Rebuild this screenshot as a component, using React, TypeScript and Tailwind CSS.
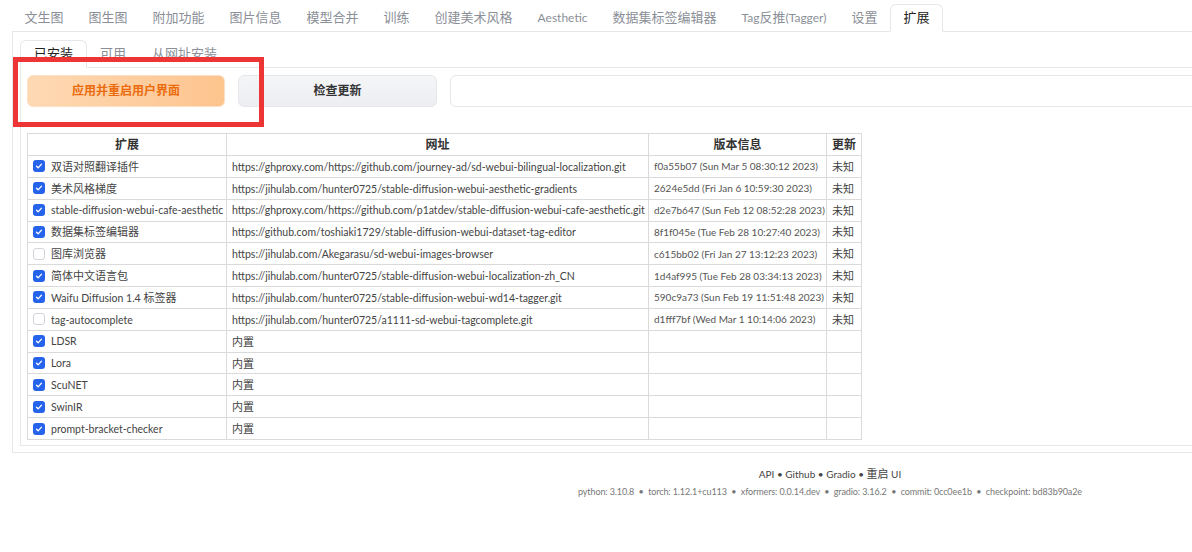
import React from 'react';

type Ext = { name: string; url: string; version: string; update: string; enabled: boolean };

const topTabs = [
  '文生图',
  '图生图',
  '附加功能',
  '图片信息',
  '模型合并',
  '训练',
  '创建美术风格',
  'Aesthetic',
  '数据集标签编辑器',
  'Tag反推(Tagger)',
  '设置',
  '扩展',
];

const exts: Ext[] = [
  { name: '双语对照翻译插件', url: 'https://ghproxy.com/https://github.com/journey-ad/sd-webui-bilingual-localization.git', version: 'f0a55b07 (Sun Mar 5 08:30:12 2023)', update: '未知', enabled: true },
  { name: '美术风格梯度', url: 'https://jihulab.com/hunter0725/stable-diffusion-webui-aesthetic-gradients', version: '2624e5dd (Fri Jan 6 10:59:30 2023)', update: '未知', enabled: true },
  { name: 'stable-diffusion-webui-cafe-aesthetic', url: 'https://ghproxy.com/https://github.com/p1atdev/stable-diffusion-webui-cafe-aesthetic.git', version: 'd2e7b647 (Sun Feb 12 08:52:28 2023)', update: '未知', enabled: true },
  { name: '数据集标签编辑器', url: 'https://github.com/toshiaki1729/stable-diffusion-webui-dataset-tag-editor', version: '8f1f045e (Tue Feb 28 10:27:40 2023)', update: '未知', enabled: true },
  { name: '图库浏览器', url: 'https://jihulab.com/Akegarasu/sd-webui-images-browser', version: 'c615bb02 (Fri Jan 27 13:12:23 2023)', update: '未知', enabled: false },
  { name: '简体中文语言包', url: 'https://jihulab.com/hunter0725/stable-diffusion-webui-localization-zh_CN', version: '1d4af995 (Tue Feb 28 03:34:13 2023)', update: '未知', enabled: true },
  { name: 'Waifu Diffusion 1.4 标签器', url: 'https://jihulab.com/hunter0725/stable-diffusion-webui-wd14-tagger.git', version: '590c9a73 (Sun Feb 19 11:51:48 2023)', update: '未知', enabled: true },
  { name: 'tag-autocomplete', url: 'https://jihulab.com/hunter0725/a1111-sd-webui-tagcomplete.git', version: 'd1fff7bf (Wed Mar 1 10:14:06 2023)', update: '未知', enabled: false },
  { name: 'LDSR', url: '内置', version: '', update: '', enabled: true },
  { name: 'Lora', url: '内置', version: '', update: '', enabled: true },
  { name: 'ScuNET', url: '内置', version: '', update: '', enabled: true },
  { name: 'SwinIR', url: '内置', version: '', update: '', enabled: true },
  { name: 'prompt-bracket-checker', url: '内置', version: '', update: '', enabled: true },
];

// latin runs render a touch smaller than CJK runs, as in the original UI font mix
const Mixed: React.FC<{ text: string; cjk: string; latin: string }> = ({ text, cjk, latin }) => (
  <>
    {text
      .split(/([\u3000-\u9fff]+)/)
      .filter(Boolean)
      .map((part, i) => (
        <span key={i} className={/[\u3000-\u9fff]/.test(part) ? cjk : latin}>
          {part}
        </span>
      ))}
  </>
);

const Checkbox: React.FC<{ checked: boolean }> = ({ checked }) =>
  checked ? (
    <span className="w-[12px] h-[12px] rounded-[3px] bg-[#2563eb] flex items-center justify-center shrink-0">
      <svg viewBox="0 0 12 12" className="w-[10px] h-[10px]">
        <path d="M3 6.2l2 2 4-4.4" fill="none" stroke="white" strokeWidth="1.6" strokeLinecap="round" strokeLinejoin="round" />
      </svg>
    </span>
  ) : (
    <span className="w-[12px] h-[12px] rounded-[3px] border border-[#d1d5db] bg-white shrink-0" />
  );

export default function App() {
  const base = 'border border-[#dadada] px-[5px] leading-none whitespace-nowrap overflow-hidden';
  const cell = `${base} h-[21.85px]`;
  const th = `${base} h-[22px] font-bold text-[12px] text-[#333]`;
  return (
    <div className="relative w-full h-[552px] overflow-hidden bg-white text-[#444] font-['Lato','Noto_Sans_CJK_SC',sans-serif]">
      <div className="w-[1660px] pt-[4px]">
        {/* top tabs */}
        <div className="flex mx-[12px] border-b border-[#e5e7eb] h-[28px]">
          {topTabs.map((t) => {
            const active = t === '扩展';
            return (
              <div
                key={t}
                className={`px-[12.5px] flex items-center text-[13px] ${
                  active
                    ? 'bg-white text-[#222] border border-[#e5e7eb] border-b-white rounded-t-[6px] -mb-px'
                    : 'text-[#8b8f97]'
                }`}
              >
                <Mixed text={t} cjk="text-[13px]" latin="text-[12px]" />
              </div>
            );
          })}
        </div>

        {/* outer panel */}
        <div className="mx-[12px] border-x border-b border-[#e5e7eb] px-[7px] pt-[8px] pb-[6px]">
          <div className="flex border-b border-[#e5e7eb] h-[28px]">
            {['已安装', '可用', '从网址安装'].map((t, i) => (
              <div
                key={t}
                className={`px-[13px] flex items-center text-[13px] ${
                  i === 0
                    ? 'bg-white text-[#222] border border-[#e5e7eb] border-b-white rounded-t-[6px] -mb-px'
                    : 'text-[#8b8f97]'
                }`}
              >
                {t}
              </div>
            ))}
          </div>

          {/* inner panel */}
          <div className="border-l border-r border-b border-[#e5e7eb] px-[6px] pt-[7px] pb-[5px]">
            <div className="flex gap-[13px] h-[32px]">
              <button className="w-[198px] rounded-[6px] border border-[#fde0c2] bg-gradient-to-r from-[#fed9b4] to-[#fdc48e] text-[#ea6a0c] text-[12px] font-bold">
                应用并重启用户界面
              </button>
              <button className="w-[199px] rounded-[6px] border border-[#e5e7eb] bg-gradient-to-b from-[#f4f5f7] to-[#eceef1] text-[#333] text-[12px] font-bold">
                检查更新
              </button>
              <div className="flex-1 rounded-[6px] border border-[#e5e7eb] bg-white" />
            </div>

            <table className="mt-[26px] border-collapse table-fixed w-[834px] text-[11px]">
              <colgroup>
                <col className="w-[199px]" />
                <col className="w-[422px]" />
                <col className="w-[178px]" />
                <col className="w-[35px]" />
              </colgroup>
              <thead>
                <tr>
                  <th className={th}>扩展</th>
                  <th className={th}>网址</th>
                  <th className={th}>版本信息</th>
                  <th className={`${th} px-[3px]`}>更新</th>
                </tr>
              </thead>
              <tbody>
                {exts.map((e) => (
                  <tr key={e.name}>
                    <td className={cell}>
                      <div className="flex items-center gap-[6px]">
                        <Checkbox checked={e.enabled} />
                        <span>
                          <Mixed text={e.name} cjk="text-[11px]" latin="text-[10.5px]" />
                        </span>
                      </div>
                    </td>
                    <td className={cell}>
                      <Mixed text={e.url} cjk="text-[11px]" latin="text-[10.5px]" />
                    </td>
                    <td className={`${cell} text-[10px] text-[#555]`}>{e.version}</td>
                    <td className={`${cell} px-[4px]`}>{e.update}</td>
                  </tr>
                ))}
              </tbody>
            </table>
          </div>
        </div>

        {/* footer */}
        <div className="mt-[13px] flex flex-col items-center">
          <div className="text-[10.5px] text-[#444]">
            <Mixed text="API • Github • Gradio • 重启 UI" cjk="text-[11px]" latin="text-[10px]" />
          </div>
          <div className="mt-[2px] text-[9px] text-[#777] tracking-[-0.1px]">
            python: 3.10.8 &nbsp;•&nbsp; torch: 1.12.1+cu113 &nbsp;•&nbsp; xformers: 0.0.14.dev &nbsp;•&nbsp; gradio: 3.16.2 &nbsp;•&nbsp; commit: 0cc0ee1b &nbsp;•&nbsp; checkpoint: bd83b90a2e
          </div>
        </div>
      </div>

      {/* annotation box */}
      <div className="absolute left-[13px] top-[57px] w-[251px] h-[70px] border-[5px] border-[#ee3535] pointer-events-none" />
    </div>
  );
}
